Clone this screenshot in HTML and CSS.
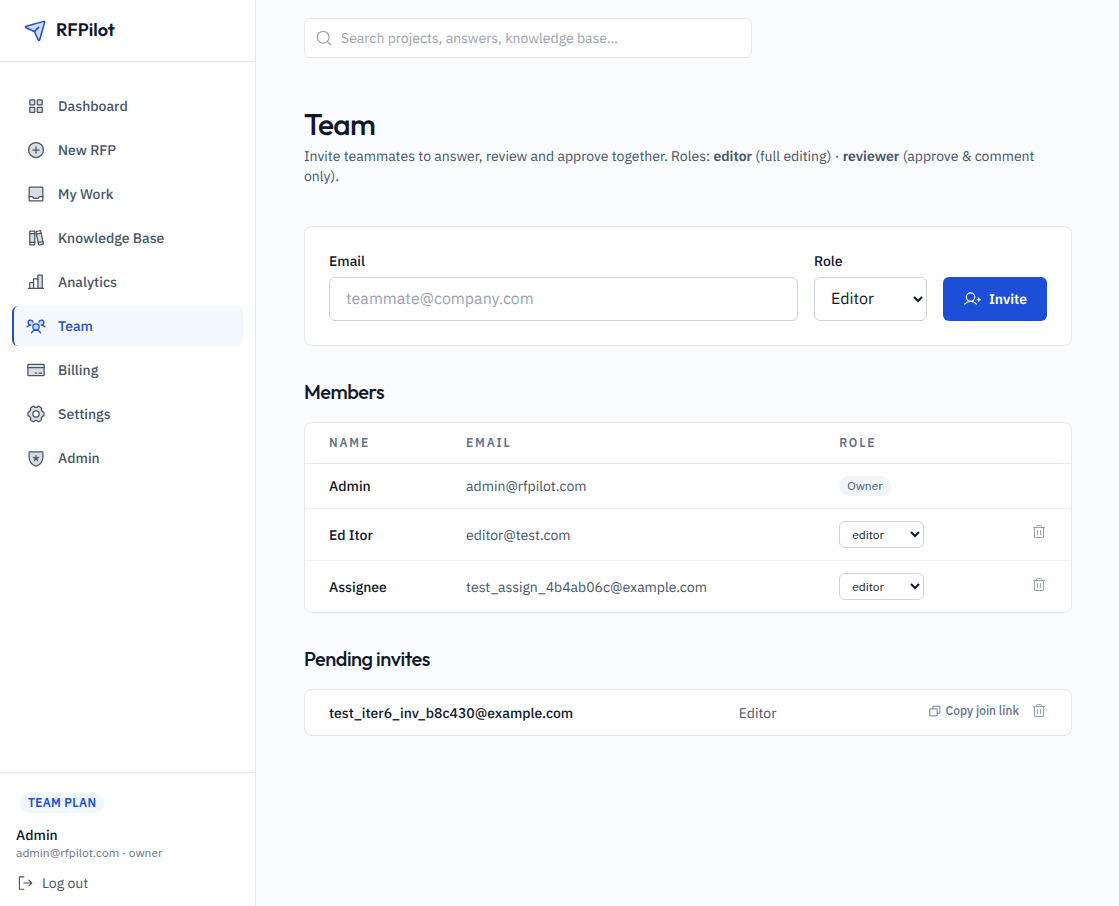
FILE: index.html
```html
<!DOCTYPE html>
<html lang="en">
<head>
<meta charset="utf-8">
<meta name="viewport" content="width=device-width, initial-scale=1">
<title>Team – RFPilot</title>
<link rel="stylesheet" href="styles.css">
</head>
<body>
<svg class="sprite" aria-hidden="true">
  <symbol id="trash" viewBox="0 0 256 256"><path d="M216 56H40M104 104v64M152 104v64M200 56v152a8 8 0 0 1-8 8H64a8 8 0 0 1-8-8V56M168 56V40a16 16 0 0 0-16-16h-48a16 16 0 0 0-16 16v16"/></symbol>
</svg>
<div class="app">
  <aside class="sidebar">
    <a class="brand" href="#">
      <svg class="icon icon-logo" viewBox="0 0 256 256"><path class="tint" d="M210.3 35.9 23.9 88.4a8 8 0 0 0-1.2 15l85.6 40.5a7.8 7.8 0 0 1 3.8 3.8l40.5 85.6a8 8 0 0 0 15-1.2L220.1 45.7a7.9 7.9 0 0 0-9.8-9.8Z"/><path d="M110.9 145.1 156 100"/></svg>
      <span>RFPilot</span>
    </a>
    <nav class="nav">
      <a class="nav-item" href="#"><svg class="icon" viewBox="0 0 256 256"><rect class="tint" x="48" y="48" width="64" height="64" rx="8"/><rect class="tint" x="144" y="48" width="64" height="64" rx="8"/><rect class="tint" x="48" y="144" width="64" height="64" rx="8"/><rect class="tint" x="144" y="144" width="64" height="64" rx="8"/></svg>Dashboard</a>
      <a class="nav-item" href="#"><svg class="icon" viewBox="0 0 256 256"><circle class="tint" cx="128" cy="128" r="96"/><path d="M88 128h80M128 88v80"/></svg>New RFP</a>
      <a class="nav-item" href="#"><svg class="icon" viewBox="0 0 256 256"><path class="tint-only" d="M40 160h36.7a8 8 0 0 1 5.6 2.3l19.4 19.4a8 8 0 0 0 5.6 2.3h41.4a8 8 0 0 0 5.6-2.3l19.4-19.4a8 8 0 0 1 5.6-2.3H216V40H40Z"/><rect x="40" y="40" width="176" height="176" rx="8"/><path d="M40 160h36.7a8 8 0 0 1 5.6 2.3l19.4 19.4a8 8 0 0 0 5.6 2.3h41.4a8 8 0 0 0 5.6-2.3l19.4-19.4a8 8 0 0 1 5.6-2.3H216"/></svg>My Work</a>
      <a class="nav-item" href="#"><svg class="icon" viewBox="0 0 256 256"><path class="tint-only" d="M48 72h64v112H48Z"/><rect x="48" y="40" width="64" height="176" rx="8"/><path d="M48 72h64M48 184h64"/><g transform="rotate(-12 176 126)"><path class="tint-only" d="M144 70h62v112h-62Z"/><rect x="144" y="38" width="62" height="176" rx="8"/><path d="M144 70h62M144 182h62"/></g></svg>Knowledge Base</a>
      <a class="nav-item" href="#"><svg class="icon" viewBox="0 0 256 256"><path class="tint" d="M152 208V40h56v168Z"/><path d="M48 208v-72h48M96 208V88h56M32 208h192"/></svg>Analytics</a>
      <a class="nav-item active" href="#" aria-current="page"><svg class="icon" viewBox="0 0 256 256"><circle class="tint" cx="128" cy="140" r="40"/><path class="tint-only" d="M60 116a32 32 0 1 1 31.4-38v28L80 130ZM196 116a32 32 0 1 0-31.4-38v28l12 24Z"/><path d="M196 116a59.8 59.8 0 0 1 48 24M12 140a59.8 59.8 0 0 1 48-24M70.4 216a64.1 64.1 0 0 1 115.2 0M60 116a32 32 0 1 1 31.4-38M164.6 78A32 32 0 1 1 196 116"/></svg>Team</a>
      <a class="nav-item" href="#"><svg class="icon" viewBox="0 0 256 256"><rect class="tint" x="24" y="56" width="208" height="144" rx="8"/><path d="M24 96h208M168 168h32M120 168h16"/></svg>Billing</a>
      <a class="nav-item" href="#"><svg class="icon" viewBox="0 0 256 256"><path class="tint" fill-rule="evenodd" d="M228.900 153.200Q212 158 207.700 160.200L195.800 180.900Q196 194 200.200 202.800Q180 221 156.700 228Q148 216 140 213.200H116Q108 216 99.300 228Q76 221 55.800 202.800Q60 194 60.200 180.900L48.300 160.200Q44 158 27.100 153.200Q22 128 27.100 102.800Q44 98 48.300 95.800L60.200 75.100Q60 62 55.800 53.200Q76 35 99.300 28Q108 40 116 42.800H140Q148 40 156.700 28Q180 35 200.200 53.200Q196 62 195.800 75.100L207.700 95.800Q212 98 228.900 102.800Q234 128 228.900 153.200ZM168 128a40 40 0 1 0-80 0a40 40 0 1 0 80 0Z"/></svg>Settings</a>
      <a class="nav-item" href="#"><svg class="icon" viewBox="0 0 256 256"><path class="tint" d="M40 114.800V56a8 8 0 0 1 8-8h160a8 8 0 0 1 8 8v58.800c0 84.200-71.300 112-85.500 116.800a7.500 7.500 0 0 1-5 0C111.300 226.800 40 199 40 114.800Z"/><path d="M128 132V96M128 132l-34-11M128 132l34-11M128 132l-21 29M128 132l21 29"/></svg>Admin</a>
    </nav>
    <div class="account">
      <span class="plan">Team plan</span>
      <strong class="account-name">Admin</strong>
      <span class="account-mail">admin@rfpilot.com · owner</span>
      <button class="logout" type="button"><svg class="icon" viewBox="0 0 256 256"><path d="M112 40H48v176h64M112 128h112M184 88l40 40-40 40"/></svg>Log out</button>
    </div>
  </aside>
  <div class="content">
    <header class="topbar">
      <label class="search">
        <svg class="icon" viewBox="0 0 256 256"><circle cx="116" cy="116" r="84"/><path d="M175.400 175.400 224 224"/></svg>
        <input type="search" aria-label="Search" placeholder="Search projects, answers, knowledge base…">
      </label>
    </header>
    <main class="main">
      <h1>Team</h1>
      <p class="intro">Invite teammates to answer, review and approve together. Roles: <strong>editor</strong> (full editing) · <strong>reviewer</strong> (approve &amp; comment only).</p>
      <form class="card invite">
        <div class="field field-grow">
          <label for="email">Email</label>
          <input id="email" type="email" placeholder="teammate@company.com">
        </div>
        <div class="field">
          <label for="role">Role</label>
          <select id="role"><option>Editor</option><option>Reviewer</option></select>
        </div>
        <button class="primary" type="button"><svg class="icon" viewBox="0 0 256 256"><circle cx="108" cy="100" r="60"/><path d="M24 200c20.600-24.500 49.600-40 84-40s63.500 15.500 84 40M200 136h48M224 112v48"/></svg>Invite</button>
      </form>

      <h2>Members</h2>
      <div class="card">
        <table class="members">
          <thead><tr><th class="col-name">Name</th><th class="col-email">Email</th><th>Role</th><th class="col-action"></th></tr></thead>
          <tbody>
            <tr><td class="name">Admin</td><td>admin@rfpilot.com</td><td><span class="tag">Owner</span></td><td></td></tr>
            <tr class="editable"><td class="name">Ed Itor</td><td>editor@test.com</td><td><select aria-label="Role of Ed Itor"><option>editor</option><option>reviewer</option></select></td><td class="actions"><button class="remove" type="button" aria-label="Remove Ed Itor"><svg class="icon"><use href="#trash"/></svg></button></td></tr>
            <tr class="editable"><td class="name">Assignee</td><td>test_assign_4b4ab06c@example.com</td><td><select aria-label="Role of Assignee"><option>editor</option><option>reviewer</option></select></td><td class="actions"><button class="remove" type="button" aria-label="Remove Assignee"><svg class="icon"><use href="#trash"/></svg></button></td></tr>
          </tbody>
        </table>
      </div>

      <h2>Pending invites</h2>
      <div class="card">
        <table class="pending">
          <tbody>
            <tr><td class="name col-invite">test_iter6_inv_b8c430@example.com</td><td>Editor</td><td class="actions"><div class="action-row"><button class="copy" type="button"><svg class="icon" viewBox="0 0 256 256"><path d="M168 168h48V40H88v48"/><rect x="40" y="88" width="128" height="128"/></svg>Copy join link</button><button class="remove" type="button" aria-label="Revoke invite"><svg class="icon"><use href="#trash"/></svg></button></div></td></tr>
          </tbody>
        </table>
      </div>
    </main>
  </div>
</div>
</body>
</html>
```
FILE: styles.css
```css
* { box-sizing: border-box; }

body {
  margin: 0;
  background: #f9fbfd;
  color: #0f172a;
  font: 14px/20px "IBM Plex Sans", "Noto Sans", sans-serif;
  text-rendering: geometricPrecision;
}

a { color: inherit; text-decoration: none; }

button, input, select { font: inherit; color: inherit; text-rendering: inherit; }

h2, th, .plan, .account-mail, .tag, .copy, td select { text-rendering: auto; }

button {
  display: inline-flex;
  align-items: center;
  padding: 0;
  border: 0;
  background: none;
  cursor: pointer;
}

.sprite { display: none; }

.icon {
  flex: none;
  width: 20px;
  height: 20px;
  fill: none;
  stroke: currentColor;
  stroke-width: 16;
  stroke-linecap: round;
  stroke-linejoin: round;
}

.tint { fill: currentColor; fill-opacity: 0.2; }
.tint-only { fill: currentColor; fill-opacity: 0.2; stroke: none; }

.app { display: flex; min-height: 100vh; }

.sidebar {
  display: flex;
  flex: none;
  flex-direction: column;
  width: 256px;
  border-right: 1px solid #e2e8f0;
  background: #fff;
}

.brand {
  display: flex;
  align-items: center;
  gap: 8px;
  height: 62px;
  padding: 0 24px 2px;
  border-bottom: 1px solid #e2e8f0;
  font: 600 18px/28px "Outfit", Lato, sans-serif;
}

.icon-logo { width: 24px; height: 24px; color: #1d4ed8; }

.nav {
  display: flex;
  flex: 1;
  flex-direction: column;
  gap: 4px;
  padding: 24px 12px;
}

.nav-item {
  display: flex;
  align-items: center;
  gap: 12px;
  height: 40px;
  padding: 0 12px;
  border-left: 2px solid transparent;
  border-radius: 6px;
  color: #475569;
  font-weight: 500;
}

.nav-item.active {
  border-left-color: #1d4ed8;
  background: #f3f8ff;
  color: #1d4ed8;
}

.account {
  display: flex;
  flex-direction: column;
  align-items: flex-start;
  padding: 20px 16px 13px;
  border-top: 1px solid #e2e8f0;
}

.plan {
  margin: 0 4px 12px;
  padding: 0 8px;
  border-radius: 10px;
  background: #eff6ff;
  color: #1d4ed8;
  font-size: 12px;
  font-weight: 600;
  letter-spacing: 0.025em;
  text-transform: uppercase;
}

.account-name { font-weight: 500; }
.account-mail { color: #64748b; font-size: 12px; line-height: 16px; }
.logout { gap: 8px; margin-top: 12px; color: #475569; }
.logout .icon { width: 18px; height: 18px; }

.content { flex: 1; min-width: 0; }

.topbar { padding: 18px 48px; }

.search {
  display: flex;
  align-items: center;
  gap: 8px;
  max-width: 448px;
  height: 40px;
  padding: 0 10px;
  border: 1px solid #e2e8f0;
  border-radius: 6px;
  background: #fff;
  color: #9ca3af;
}

.search .icon { width: 18px; height: 18px; }

.search input {
  flex: 1;
  min-width: 0;
  padding: 0;
  border: 0;
  outline: 0;
  background: none;
  color: #0f172a;
}

input::placeholder { color: #9ca3af; opacity: 1; }

.main { padding: 30px 47px 48px 48px; }

h1, h2 {
  margin: 0;
  font-family: "Outfit", Lato, sans-serif;
  font-weight: 500;
  letter-spacing: -0.025em;
}

h1 { font-size: 30px; line-height: 36px; }
h2 { margin: 32px 0 16px; font-size: 20px; line-height: 28px; }

.intro { margin: 4px 0 40px; color: #475569; }
.intro strong { font-weight: 600; }

.card {
  border: 1px solid #e2e8f0;
  border-radius: 8px;
  background: #fff;
}

.invite {
  display: flex;
  align-items: flex-end;
  gap: 16px;
  padding: 24px;
}

.field { display: flex; flex-direction: column; gap: 6px; }
.field-grow { flex: 1; min-width: 0; }
.field label { font-weight: 500; }

.field input, .field select {
  width: 100%;
  height: 44px;
  padding: 0 16px;
  border: 1px solid #cbd5e1;
  border-radius: 6px;
  background: #fff;
  font-size: 16px;
}

.field select { width: 113px; padding: 0 12px; }

.primary {
  justify-content: center;
  gap: 8px;
  width: 104px;
  height: 44px;
  border-radius: 6px;
  background: #1d4ed8;
  color: #fff;
  font-weight: 600;
}

.primary .icon { width: 18px; height: 18px; }

table { width: 100%; border-collapse: collapse; table-layout: fixed; }

th {
  height: 40px;
  padding: 0 24px;
  color: #64748b;
  font-size: 12px;
  font-weight: 600;
  letter-spacing: 0.15em;
  text-align: left;
  text-transform: uppercase;
}

td { height: 45px; padding: 0 24px; color: #475569; }

.members tbody tr { border-top: 1px solid #eef2f6; }
.members tbody tr:first-child { border-top-color: #e2e8f0; }
.editable td { height: 52px; padding-top: 2px; }
.editable td:has(select) { padding-top: 0; }

.col-name { width: 17.9%; }
.col-email { width: 48.7%; }
.col-action { width: 14%; }
.col-invite { width: 53.5%; }

td.name { color: #0f172a; font-weight: 500; white-space: nowrap; }

.tag {
  display: inline-block;
  padding: 0 8px;
  border-radius: 10px;
  background: #f1f5f9;
  font-size: 12px;
}

td select {
  display: block;
  width: 85px;
  height: 27px;
  padding: 0 8px;
  border: 1px solid #cbd5e1;
  border-radius: 6px;
  background: #fff;
  color: #0f172a;
  font-size: 12px;
}

.actions { padding-bottom: 4px; text-align: right; }
.editable .actions { padding-bottom: 8px; }
.action-row { display: flex; align-items: center; justify-content: flex-end; gap: 12px; }
.remove { color: #94a3b8; vertical-align: middle; }
.remove .icon { width: 16px; height: 16px; }
.copy { gap: 4px; color: #64748b; font-size: 12px; font-weight: 500; }
.copy .icon { width: 14px; height: 14px; }
```
